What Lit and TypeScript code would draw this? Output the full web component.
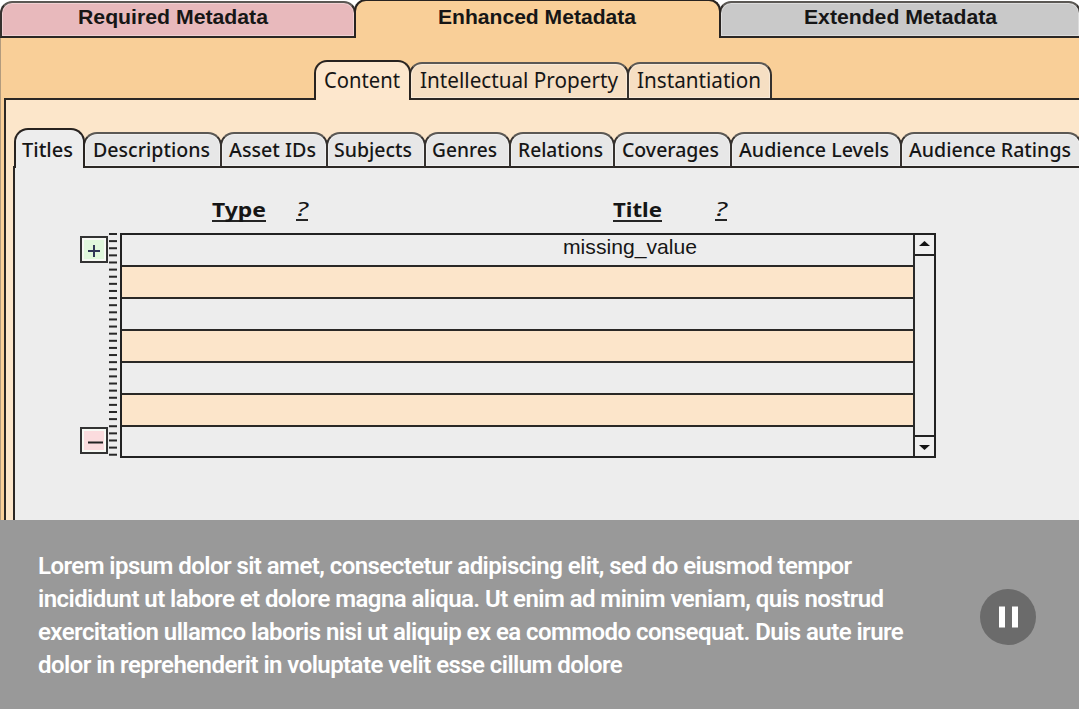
import { LitElement, html, css, svg } from "lit";
import { customElement, property } from "lit/decorators.js";
import { classMap } from "lit/directives/class-map.js";

interface Tab {
  label: string;
  /** full width of the tab, borders included */
  width: number;
  /** distance from the tab's outer left edge to its label */
  inset: number;
  /** width of the label itself */
  text: number;
  tone?: string;
}

const SECTIONS: Tab[] = [
  { label: "Required Metadata", width: 356, inset: 78, text: 190, tone: "rose" },
  { label: "Enhanced Metadata", width: 367, inset: 84, text: 198 },
  { label: "Extended Metadata", width: 362, inset: 85, text: 193, tone: "grey" },
];
const GROUPS: Tab[] = [
  { label: "Content", width: 97, inset: 10, text: 76 },
  { label: "Intellectual Property", width: 220, inset: 11, text: 198 },
  { label: "Instantiation", width: 145, inset: 10, text: 124 },
];
const FIELDS: Tab[] = [
  { label: "Titles", width: 71, inset: 8, text: 51 },
  { label: "Descriptions", width: 139, inset: 10, text: 117 },
  { label: "Asset IDs", width: 108, inset: 9, text: 87 },
  { label: "Subjects", width: 100, inset: 8, text: 78 },
  { label: "Genres", width: 87, inset: 8, text: 65 },
  { label: "Relations", width: 106, inset: 9, text: 85 },
  { label: "Coverages", width: 119, inset: 9, text: 97 },
  { label: "Audience Levels", width: 172, inset: 9, text: 150 },
  { label: "Audience Ratings", width: 182, inset: 9, text: 162 },
];

@customElement("fit-label")
class FitLabel extends LitElement {
  @property() text = "";
  @property({ type: Number }) width = 0;
  static styles = css`
    :host { display: block; flex: none; }
    svg { display: block; overflow: visible; fill: #161616; }
  `;
  render() {
    return html`<svg width=${this.width} height="24">
      ${svg`<text x="0" y="18" textLength=${this.width} lengthAdjust="spacingAndGlyphs">${this.text}</text>`}
    </svg>`;
  }
}

@customElement("tab-strip")
class TabStrip extends LitElement {
  @property({ attribute: false }) tabs: Tab[] = [];
  @property({ type: Number }) active = 0;
  static styles = css`
    :host { display: flex; align-items: flex-end; box-sizing: border-box; }
    .lead, .rest { box-sizing: border-box; align-self: stretch; border-bottom: 2px solid #2b2724; }
    .lead { flex: none; width: var(--lead, 0); margin-right: -2px; }
    .rest { flex: 1; margin-left: -2px; }
    .tab {
      flex: none; box-sizing: border-box; display: flex;
      height: var(--tab-h); padding-top: var(--tab-pad);
      border: 2px solid #35312e; border-top-color: var(--edge, #5b5854);
      border-bottom-color: #2b2724;
      border-radius: var(--r) var(--r) 0 0;
      background: var(--idle);
      box-shadow: inset 0 0 0 1px rgba(255, 255, 255, 0.35);
    }
    .tab + .tab { margin-left: -2px; }
    .active {
      height: var(--active-h); padding-top: calc(var(--tab-pad) + var(--active-h) - var(--tab-h));
      background: var(--current); border-color: #282320; border-bottom: 0; box-shadow: none;
      position: relative;
    }
    .rose { background: #e8b9bc; }
    .grey { background: #c9c9c9; }
  `;
  render() {
    return html`
      <div class="lead"></div>
      ${this.tabs.map((t, i) => html`
        <div
          class=${classMap({ tab: true, active: i === this.active, [t.tone ?? "plain"]: true })}
          style="width:${t.width}px;padding-left:${t.inset - 2}px"
        ><fit-label .text=${t.label} .width=${t.text}></fit-label></div>`)}
      <div class="rest"></div>`;
  }
}

@customElement("title-table")
class TitleTable extends LitElement {
  static styles = css`
    :host { display: block; font: 21px "Liberation Sans", sans-serif; color: #161616; }
    .head { display: flex; height: 33px; padding: 1px 0 0 197px; box-sizing: border-box; font: 700 20px "Noto Sans", sans-serif; }
    .head div { border-bottom: 2px solid #252525; height: 21px; box-sizing: border-box; }
    .head .help { font-weight: 400; font-style: italic; height: 20px; }
    .type-help { margin: 0 305px 0 30px; }
    .title-help { margin-left: 53px; }
    .head fit-label { margin-top: -2px; }
    .head .help fit-label { margin-top: -3px; }
    .body { display: flex; padding-left: 65px; }
    .buttons { width: 28px; height: 225px; display: flex; flex-direction: column; justify-content: space-between; padding: 3px 0 4px; box-sizing: border-box; }
    .btn { width: 28px; height: 27px; box-sizing: border-box; border: 2px solid #333; box-shadow: inset 0 0 0 2px #f7f9f4; }
    .btn svg { display: block; }
    .add { background: #e0f8dc; }
    .remove { background: #fbdcde; }
    .ticks { margin: 0 3px 0 1px; display: block; }
    .grid { width: 816px; height: 225px; box-sizing: border-box; border: 2px solid #222; display: flex; }
    .rows { flex: 1; display: grid; grid-template-rows: repeat(6, 32px) 1fr; }
    .row { border-bottom: 2px solid #2a2826; padding-left: 441px; }
    .row:nth-child(even) { background: #fce5ca; }
    .row:last-child { border-bottom: 0; }
    .row fit-label { margin-top: 1px; }
    .scroll { width: 19px; border-left: 2px solid #2a2a2a; display: flex; flex-direction: column; justify-content: space-between; }
    .arrow { height: 19px; display: block; background: #f0f0f0; }
    .up { border-bottom: 2px solid #222; }
    .down { border-top: 2px solid #222; }
  `;
  render() {
    const ticks = Array.from({ length: 32 }, (_, i) => i * 7.12);
    return html`
      <div class="head">
        <div><fit-label text="Type" width="54"></fit-label></div>
        <div class="help type-help"><fit-label text="?" width="12"></fit-label></div>
        <div><fit-label text="Title" width="49"></fit-label></div>
        <div class="help title-help"><fit-label text="?" width="12"></fit-label></div>
      </div>
      <div class="body">
        <div class="buttons">
          <div class="btn add"><svg width="24" height="23"><path d="M6 13h12M12 7v12" stroke="#303656" stroke-width="2"/></svg></div>
          <div class="btn remove"><svg width="24" height="23"><path d="M6 13.5h15" stroke="#222" stroke-width="2"/></svg></div>
        </div>
        <svg class="ticks" width="8" height="225">
          ${ticks.map((y) => svg`<rect x="0" y=${y} width="8" height="2" fill="#282828"/>`)}
        </svg>
        <div class="grid">
          <div class="rows">
            ${[0, 1, 2, 3, 4, 5, 6].map((i) => html`<div class="row">${i === 0
              ? html`<fit-label text="missing_value" width="134"></fit-label>` : ""}</div>`)}
          </div>
          <div class="scroll">
            <svg class="arrow up" width="19" height="19"><path d="M4 11L9.500 6L15 11z" fill="#151515"/></svg>
            <svg class="arrow down" width="19" height="19"><path d="M4 8L9.500 13L15 8z" fill="#151515"/></svg>
          </div>
        </div>
      </div>`;
  }
}

@customElement("app-root")
class AppRoot extends LitElement {
  static styles = css`
    :host { display: block; width: 1079px; height: 709px; overflow: hidden; }
    .slide { height: 520px; overflow: hidden; background: #f9cf98; box-shadow: inset 1px 0 0 #b39b7d; }
    .sections {
      height: 38px; --lead: 2px; --tab-h: 37px; --active-h: 39px; --tab-pad: 3px; --r: 12px;
      --current: #f9cf98; --idle: #c9c9c9;
      width: 1084px; background: linear-gradient(#fff 20px, #f9cf98 20px);
      font: 700 21px "Liberation Sans", sans-serif;
    }
    .groups {
      height: 62px; padding-left: 4px; --lead: 312px; --tab-h: 38px; --active-h: 40px; --tab-pad: 6px; --r: 13px;
      --current: #fde7cd; --idle: #f6dfc3;
      font: 21px "Noto Sans", sans-serif;
    }
    .group-panel { margin-left: 4px; height: 420px; box-sizing: border-box; border-left: 2px solid #2b2724; background: #fce6ca; padding: 28px 0 0 7px; }
    .fields {
      height: 40px; width: 1072px; --lead: 3px; --tab-h: 36px; --active-h: 40px; --tab-pad: 5px; --r: 14px;
      --current: #ededed; --idle: #e7e7e7;
      font: 500 20px "Noto Sans", sans-serif;
    }
    .field-panel { height: 352px; box-sizing: border-box; border-left: 2px solid #2b2724; background: #ededed; padding-top: 32px; }
    .caption {
      height: 189px; box-sizing: border-box; background: #999; color: #fff;
      display: flex; justify-content: space-between; padding: 30px 43px 0 38px;
      font: 600 24px/33px Roboto, sans-serif; letter-spacing: -0.56px;
    }
    .copy { display: grid; grid-auto-rows: 33px; }
    .pause { width: 56px; height: 56px; margin-top: 39px; }
  `;
  render() {
    return html`
      <div class="slide">
        <tab-strip class="sections" .tabs=${SECTIONS} .active=${1}></tab-strip>
        <tab-strip class="groups" .tabs=${GROUPS} .active=${0}></tab-strip>
        <div class="group-panel">
          <tab-strip class="fields" .tabs=${FIELDS} .active=${0}></tab-strip>
          <div class="field-panel"><title-table></title-table></div>
        </div>
      </div>
      <div class="caption">
        <div class="copy">
          <span>Lorem ipsum dolor sit amet, consectetur adipiscing elit, sed do eiusmod tempor</span>
          <span>incididunt ut labore et dolore magna aliqua. Ut enim ad minim veniam, quis nostrud</span>
          <span>exercitation ullamco laboris nisi ut aliquip ex ea commodo consequat. Duis aute irure</span>
          <span>dolor in reprehenderit in voluptate velit esse cillum dolore</span>
        </div>
        <svg class="pause" viewBox="0 0 56 56"><circle cx="28" cy="28" r="28" fill="#6b6b6b"/><path d="M19 17.500h6v21h-6zM32 17.500h6v21h-6z" fill="#fff"/></svg>
      </div>`;
  }
}
